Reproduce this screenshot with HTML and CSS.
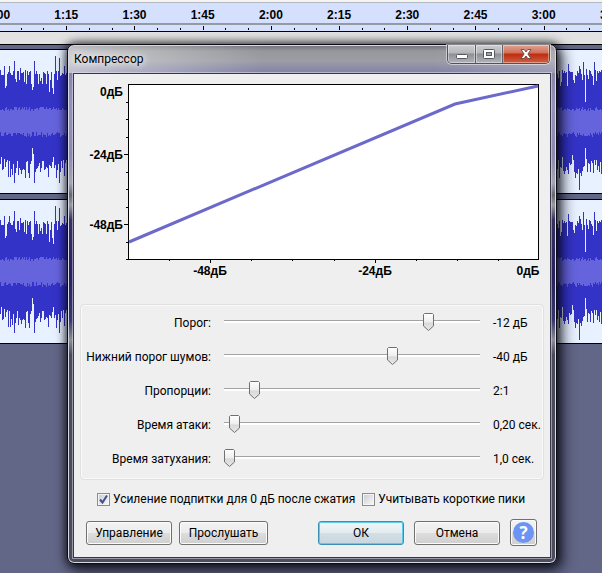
FILE: index.html
```html
<!DOCTYPE html>
<html lang="ru">
<head>
<meta charset="utf-8">
<title>Компрессор</title>
<link rel="stylesheet" href="styles.css">
</head>
<body>
<main class="editor">
  <div class="ruler">
    <div class="ruler-labels">
      <span>1:00</span><span>1:15</span><span>1:30</span><span>1:45</span><span>2:00</span><span>2:15</span><span>2:30</span><span>2:45</span><span>3:00</span><span>3:15</span>
    </div>
    <div class="ruler-ticks"><svg id="ticks" width="100%" height="6" aria-hidden="true"></svg></div>
  </div>
  <div class="track-gap"></div>
  <div class="tracks">
    <svg class="wave" height="143" aria-hidden="true"></svg>
    <svg class="wave" height="143" aria-hidden="true"></svg>
  </div>
</main>

<section class="dialog" role="dialog" aria-labelledby="dialog-title">
  <header class="titlebar">
    <h1 id="dialog-title">Компрессор</h1>
    <div class="window-buttons">
      <button type="button" class="win-btn" aria-label="Свернуть">
        <svg width="14" height="14" viewBox="0 0 14 14"><rect x="1.500" y="7.500" width="11" height="4" rx="1" fill="#fff" stroke="#555963"/></svg>
      </button>
      <button type="button" class="win-btn" aria-label="Развернуть">
        <svg width="14" height="14" viewBox="0 0 14 14"><rect x="1.500" y="2.500" width="11" height="9" rx="1" fill="#fff" stroke="#555963"/><rect x="4.500" y="5.500" width="5" height="3" fill="#a4a6aa" stroke="#555963"/></svg>
      </button>
      <button type="button" class="win-btn win-close" aria-label="Закрыть">
        <svg width="14" height="14" viewBox="0 0 14 14"><path d="M2 2.500H5.200L7 5L8.800 2.500H12L8.900 7L12 11.500H8.800L7 9L5.200 11.500H2L5.100 7Z" fill="#fff" stroke="#6b4444" stroke-width=".9"/></svg>
      </button>
    </div>
  </header>

  <form class="client">
    <svg class="chart" viewBox="74 74 476 230" role="img" aria-label="Кривая компрессии">
      <rect x="128.500" y="84.500" width="410" height="175" fill="#fff" stroke="#000"/>
      <path d="M126 102.500h2M126 119.500h2M126 137.500h2M124 154.500h4M126 172.500h2M126 189.500h2M126 207.500h2M124 224.500h4M126 242.500h2M126 259.500h2M169.500 260v1M210.500 260v3M251.500 260v1M292.500 260v1M334.500 260v1M375.500 260v3M416.500 260v1M457.500 260v1M498.500 260v1" stroke="#000" fill="none"/>
      <path d="M129 242L455 104L538 86" fill="none" stroke="#6c69cb" stroke-width="3"/>
      <g class="chart-y">
        <text x="123" y="96">0дБ</text>
        <text x="123" y="159">-24дБ</text>
        <text x="123" y="229">-48дБ</text>
      </g>
      <g class="chart-x">
        <text x="210" y="275">-48дБ</text>
        <text x="375" y="275">-24дБ</text>
        <text x="528" y="275">0дБ</text>
      </g>
    </svg>

    <div class="sliders">
      <label for="threshold">Порог:</label>
      <input type="range" id="threshold" min="-60" max="-1" value="-12">
      <output for="threshold">-12 дБ</output>
      <label for="noise">Нижний порог шумов:</label>
      <input type="range" id="noise" min="-80" max="-20" value="-40">
      <output for="noise">-40 дБ</output>
      <label for="ratio">Пропорции:</label>
      <input type="range" id="ratio" min="0" max="100" value="10">
      <output for="ratio">2:1</output>
      <label for="attack">Время атаки:</label>
      <input type="range" id="attack" min="0" max="100" value="2">
      <output for="attack">0,20 сек.</output>
      <label for="decay">Время затухания:</label>
      <input type="range" id="decay" min="0" max="100" value="0">
      <output for="decay">1,0 сек.</output>
    </div>

    <div class="checks">
      <label><input type="checkbox" checked>Усиление подпитки для 0 дБ после сжатия</label>
      <label><input type="checkbox">Учитывать короткие пики</label>
    </div>

    <div class="actions">
      <button type="button" class="btn">Управление</button>
      <button type="button" class="btn">Прослушать</button>
      <span class="spacer"></span>
      <button type="button" class="btn btn-default">ОК</button>
      <button type="button" class="btn">Отмена</button>
      <button type="button" class="btn btn-help" aria-label="Справка"><span>?</span></button>
    </div>
  </form>
</section>
<script src="script.js"></script>
</body>
</html>
```
FILE: styles.css
```css
* { box-sizing: border-box; }

body {
  margin: 0;
  min-height: 100vh;
  overflow: hidden;
  background: #636787;
  color: #000;
  font: 12px/16px Roboto, "Open Sans", sans-serif;
}

.ruler {
  overflow: hidden;
  border-top: 2px solid #f4f4f2;
  box-shadow: inset 0 1px #b4bac4;
  background: #d5e0fe;
}

.ruler-labels {
  display: grid;
  grid-template-columns: repeat(10, 1fr);
  width: calc(100% + 80px);
  margin-left: -36px;
  padding: 6px 0 0;
  text-align: center;
  font: bold 12px/15px "Liberation Sans", Arial, sans-serif;
}

.ruler-ticks {
  border-top: 2px solid #939aa0;
  border-bottom: 1px solid #000;
  background: #d5e0fe;
}

.ruler-ticks svg { display: block; }

.track-gap {
  height: 18px;
  border-bottom: 1px solid #000;
  background: linear-gradient(#e2e2e2 12px, #000 12px, #000 13px, #636787 13px);
}

.tracks {
  display: flex;
  flex-direction: column;
  gap: 5px;
}

.wave {
  display: block;
  width: 100%;
  box-sizing: content-box;
  border-bottom: 1px solid #000;
  background: #e8f1ff;
}

.wave + .wave { border-top: 1px solid #000; }

.dialog {
  position: absolute;
  top: 44px;
  left: 67px;
  right: 45px;
  padding: 0 5px 5px;
  border: 1px solid #0c0c14;
  border-radius: 7px;
  background:
    linear-gradient(90deg, rgba(255,255,255,.5), rgba(255,255,255,.25) 20%, transparent 40%, transparent 75%, rgba(255,255,255,.2)) 0 0 / 100% 28px no-repeat,
    linear-gradient(#6f7078 0, #96979c 6px, #9d9da6 16px, #8685a6 26px, #9592b8 60px, #8b89ae 110px, #a5a6b2 138px, #66676d 150px, #9a9b9f 160px, #36315f 175px, #28215f 230px, #37366c 275px, #8c8d94 295px, #494a5a 310px, #4b4c5c 100%);
  box-shadow: inset 0 0 0 1px #d7d9e2, 0 0 8px 1px rgba(0,0,0,.7), 4px 5px 14px 2px rgba(0,0,15,.65);
}

.titlebar {
  display: flex;
  justify-content: space-between;
  align-items: flex-start;
  height: 28px;
  padding: 0 1px;
}

.titlebar h1 {
  margin: 0;
  padding-top: 6px;
  font-size: 12px;
  line-height: 16px;
  font-weight: 400;
  text-shadow: 0 0 6px #fff, 0 0 8px #fff;
}

.window-buttons {
  display: flex;
  border: 1px solid #50515b;
  border-top: 0;
  border-radius: 0 0 5px 5px;
  overflow: hidden;
  box-shadow: 0 0 0 1px rgba(255,255,255,.5);
}

.win-btn {
  display: flex;
  align-items: center;
  justify-content: center;
  width: 27px;
  height: 18px;
  padding: 0;
  border: 0;
  background: linear-gradient(#cdced1, #b5b6ba 8px, #8e8f95 9px, #b3b4bb);
  box-shadow: inset 0 0 0 1px rgba(255,255,255,.4);
}

.win-btn + .win-btn { border-left: 1px solid #5f606a; }

.win-close {
  width: 47px;
  background: linear-gradient(#dea392, #d17058 8px, #bd2c11 9px, #cf6042);
}

.client {
  border: 1px solid #35354b;
  background: #efefef;
  box-shadow: 0 0 0 1px rgba(230,230,245,.5);
}

.chart {
  display: block;
  width: 100%;
  height: auto;
  font: bold 12px "Liberation Sans", Arial, sans-serif;
}

.chart-y { text-anchor: end; }
.chart-x { text-anchor: middle; }

.sliders {
  display: grid;
  grid-template-columns: 130px 1fr 50px;
  grid-auto-rows: 34px;
  column-gap: 13px;
  align-items: center;
  margin: 0 6px;
  padding-bottom: 4px;
  border: 1px solid #e0e0e0;
  border-radius: 4px;
  box-shadow: inset 0 0 0 1px #f9f9f9;
  white-space: nowrap;
}

.sliders label,
.sliders output { padding-top: 2px; }

.sliders label { justify-self: end; }

input[type="range"] {
  appearance: none;
  width: 100%;
  height: 18px;
  margin: 0;
  background: linear-gradient(#a3a3a3, #a3a3a3) 0 7px / 100% 1px no-repeat,
    linear-gradient(#fff, #fff) 0 8px / 100% 2px no-repeat;
}

input[type="range"]::-webkit-slider-runnable-track { height: 18px; }

input[type="range"]::-webkit-slider-thumb {
  appearance: none;
  width: 11px;
  height: 18px;
  background: url("data:image/svg+xml,%3Csvg xmlns='http://www.w3.org/2000/svg' width='11' height='18'%3E%3ClinearGradient id='g' x2='0' y2='1'%3E%3Cstop stop-color='%23fff'/%3E%3Cstop offset='.5' stop-color='%23eee'/%3E%3Cstop offset='.55' stop-color='%23d9d9d9'/%3E%3Cstop offset='1' stop-color='%23e8e8e8'/%3E%3C/linearGradient%3E%3Cpath d='M1.500 .5h8l1 1v11.500l-5 4.500l-5-4.500v-11.500z' fill='url(%23g)' stroke='%23707070'/%3E%3C/svg%3E") no-repeat;
}

.checks {
  display: flex;
  gap: 7px;
  padding: 11px 22px 0 23px;
  white-space: nowrap;
}

.checks label {
  display: flex;
  align-items: center;
  gap: 3px;
}

input[type="checkbox"] {
  appearance: none;
  width: 13px;
  height: 13px;
  margin: 0;
  border: 1px solid #8b8c90;
  background: linear-gradient(135deg, #cbcfd5, #f6f6f6) center / 9px 9px no-repeat #f4f4f4;
}

input[type="checkbox"]:checked {
  background: url("data:image/svg+xml,%3Csvg xmlns='http://www.w3.org/2000/svg' width='11' height='11'%3E%3Cpath d='M2 5.500L4.500 8.500L9 1.500' fill='none' stroke='%23434f8c' stroke-width='2'/%3E%3C/svg%3E") no-repeat,
    linear-gradient(135deg, #cbcfd5, #f6f6f6) center / 9px 9px no-repeat #f4f4f4;
}

.actions {
  display: flex;
  align-items: center;
  gap: 10px;
  padding: 12px 13px 11px 12px;
}

.spacer { flex: 1; }

.btn {
  width: 86px;
  height: 24px;
  padding: 0;
  border: 1px solid #707070;
  border-radius: 3px;
  background: linear-gradient(#f3f3f3, #ebebeb 50%, #dddddd 50%, #cfcfcf);
  box-shadow: inset 0 0 0 1px #fbfbfb;
  color: #000;
  font: inherit;
}

.btn:nth-child(2) {
  width: 89px;
  margin-left: -3px;
}

.btn-default {
  border-color: #3c8fb4;
  background: linear-gradient(#f0f4f6, #e4ecf0 50%, #d3dfe5 50%, #c8d6de);
  box-shadow: inset 0 0 0 1px #5ccbf0;
}

.btn-help {
  display: flex;
  align-items: center;
  justify-content: center;
  width: 27px;
  height: 27px;
}

.btn-help span {
  width: 21px;
  height: 21px;
  border-radius: 50%;
  background: #6c94f4;
  color: #fff;
  font: bold 17px/21px "Open Sans", sans-serif;
}
```
FILE: script.js
```js
const NS = "http://www.w3.org/2000/svg";

function addPath(svg, d, attrs) {
  const path = document.createElementNS(NS, "path");
  path.setAttribute("d", d);
  Object.entries(attrs).forEach(([key, value]) => path.setAttribute(key, value));
  svg.append(path);
}

// A tick every five seconds, a longer one every fifteen.
const ticks = document.getElementById("ticks");
const step = (window.innerWidth + 80) / 30;
let tickPath = "";
for (let i = 0; i < 30; i++) {
  const x = Math.round(-2 + i * step) + 0.5;
  tickPath += `M${x} ${i % 3 ? 3 : 1}V5`;
}
addPath(ticks, tickPath, { stroke: "#000" });

// Peaks that stand out of the general level, by x.
const upper = { 5: 38, 6: 36, 14: 11, 20: 18, 31: 34, 32: 40, 33: 37, 34: 11, 38: 34, 49: 42, 50: 30, 52: 38, 53: 44, 55: 6, 57: 30, 59: 8, 64: 16, 560: 36, 568: 14, 567: 36, 573: 30, 574: 33, 579: 16, 582: 30, 583: 12, 585: 52, 588: 29, 593: 35, 594: 12 };
const lower = { 1: 107, 4: 109, 14: 133, 27: 111, 32: 98, 33: 104, 34: 133, 52: 112, 53: 107, 59: 133, 562: 107, 572: 105, 573: 110, 579: 140, 585: 98, 586: 109, 596: 110 };

document.querySelectorAll(".wave").forEach((svg) => {
  let seed = 17;
  const random = () => (seed = (seed * 16807) % 2147483647) / 2147483647;
  let peaks = "";
  let body = "";
  for (let x = 0; x < window.innerWidth; x++) {
    const a = random(), b = random(), c = random();
    const top = upper[x] ?? Math.round(20 + a * 6 - (c > 0.85 ? 5 : 0) + (c < 0.08 ? 8 : 0));
    const bottom = lower[x] ?? Math.round(110 + b * 18);
    peaks += `M${x + 0.5} ${top}V${bottom}`;
    body += `M${x + 0.5} ${Math.round(57 + c * 4)}V${Math.round(82 + a * 5)}`;
  }
  addPath(svg, peaks, { stroke: "#3433c8" });
  addPath(svg, body, { stroke: "#6664dd" });
});
```
